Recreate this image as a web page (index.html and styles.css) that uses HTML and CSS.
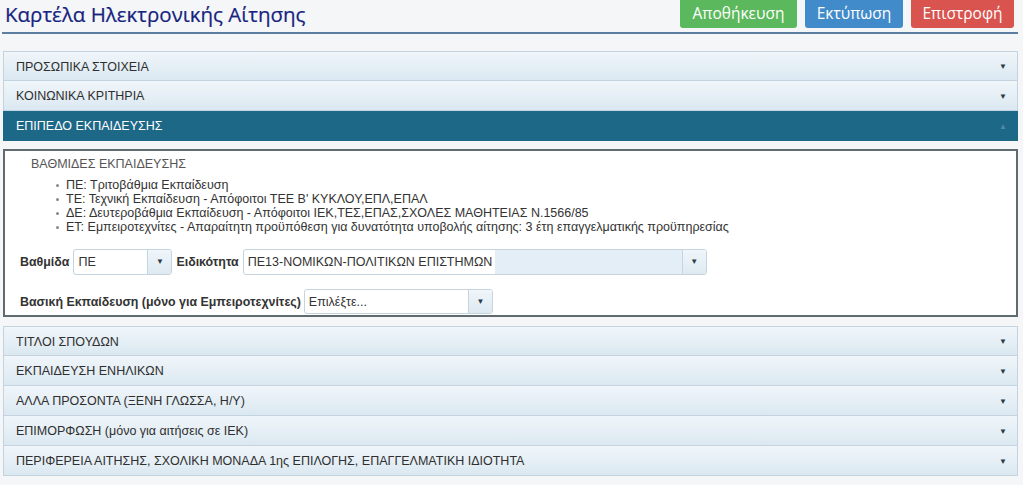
FILE: index.html
```html
<html>
    <head>
        <meta charset="utf-8">
        <link rel="stylesheet" href="styles.css">
    </head>
    <body>
        <header class="topbar">
            <h1 class="title">Καρτέλα Ηλεκτρονικής Αίτησης</h1>
            <div class="actions">
                <button class="btn btn-save">Αποθήκευση</button>
                <button class="btn btn-print">Εκτύπωση</button>
                <button class="btn btn-back">Επιστροφή</button>
            </div>
        </header>

        <section class="accordion">
            <div class="acc-head"><span>ΠΡΟΣΩΠΙΚΑ ΣΤΟΙΧΕΙΑ</span><span class="arrow">&#9660;</span></div>
            <div class="acc-head"><span>ΚΟΙΝΩΝΙΚΑ ΚΡΙΤΗΡΙΑ</span><span class="arrow">&#9660;</span></div>
            <div class="acc-head active"><span>ΕΠΙΠΕΔΟ ΕΚΠΑΙΔΕΥΣΗΣ</span><span class="arrow">&#9650;</span></div>

            <div class="acc-body">
                <div class="legend-title">ΒΑΘΜΙΔΕΣ ΕΚΠΑΙΔΕΥΣΗΣ</div>
                <ul class="legend">
                    <li>ΠΕ: Τριτοβάθμια Εκπαίδευση</li>
                    <li>ΤΕ: Τεχνική Εκπαίδευση - Απόφοιτοι ΤΕΕ Β' ΚΥΚΛΟΥ,ΕΠΛ,ΕΠΑΛ</li>
                    <li>ΔΕ: Δευτεροβάθμια Εκπαίδευση - Απόφοιτοι ΙΕΚ,ΤΕΣ,ΕΠΑΣ,ΣΧΟΛΕΣ ΜΑΘΗΤΕΙΑΣ Ν.1566/85</li>
                    <li>ΕΤ: Εμπειροτεχνίτες - Απαραίτητη προϋπόθεση για δυνατότητα υποβολής αίτησης: 3 έτη επαγγελματικής προϋπηρεσίας</li>
                </ul>

                <div class="form-row">
                    <label>Βαθμίδα</label>
                    <div class="combo combo-level">
                        <span class="combo-text">ΠΕ</span>
                        <span class="combo-btn">&#9660;</span>
                    </div>
                    <label>Ειδικότητα</label>
                    <div class="combo combo-spec">
                        <span class="combo-text">ΠΕ13-ΝΟΜΙΚΩΝ-ΠΟΛΙΤΙΚΩΝ ΕΠΙΣΤΗΜΩΝ</span>
                        <span class="combo-fill"></span>
                        <span class="combo-btn">&#9660;</span>
                    </div>
                </div>

                <div class="form-row">
                    <label>Βασική Εκπαίδευση (μόνο για Εμπειροτεχνίτες)</label>
                    <div class="combo combo-basic">
                        <span class="combo-text">Επιλέξτε...</span>
                        <span class="combo-btn">&#9660;</span>
                    </div>
                </div>
            </div>

            <div class="acc-head"><span>ΤΙΤΛΟΙ ΣΠΟΥΔΩΝ</span><span class="arrow">&#9660;</span></div>
            <div class="acc-head"><span>ΕΚΠΑΙΔΕΥΣΗ ΕΝΗΛΙΚΩΝ</span><span class="arrow">&#9660;</span></div>
            <div class="acc-head"><span>ΑΛΛΑ ΠΡΟΣΟΝΤΑ (ΞΕΝΗ ΓΛΩΣΣΑ, Η/Υ)</span><span class="arrow">&#9660;</span></div>
            <div class="acc-head"><span>ΕΠΙΜΟΡΦΩΣΗ (μόνο για αιτήσεις σε ΙΕΚ)</span><span class="arrow">&#9660;</span></div>
            <div class="acc-head"><span>ΠΕΡΙΦΕΡΕΙΑ ΑΙΤΗΣΗΣ, ΣΧΟΛΙΚΗ ΜΟΝΑΔΑ 1ης ΕΠΙΛΟΓΗΣ, ΕΠΑΓΓΕΛΜΑΤΙΚΗ ΙΔΙΟΤΗΤΑ</span><span class="arrow">&#9660;</span></div>
        </section>
    </body>
</html>
```

FILE: styles.css
```css
* { box-sizing: border-box; }

html, body {
    margin: 0;
    padding: 0;
}

body {
    background: #f4f6f7;
    font-family: "Liberation Sans", Arial, sans-serif;
    color: #333;
}

.topbar {
    display: flex;
    justify-content: space-between;
    align-items: flex-start;
    height: 34px;
    margin: 0 5px 0 2px;
    border-bottom: 2px solid #5b7ea2;
}

.title {
    margin: 0;
    padding: 0 0 0 3px;
    font-family: "Open Sans", sans-serif;
    font-weight: normal;
    font-size: 20.5px;
    line-height: 28px;
    color: #16237f;
    -webkit-text-stroke: 0.2px #16237f;
}

.actions {
    display: flex;
    gap: 8px;
    padding-right: 4px;
}

.btn {
    height: 28px;
    padding: 0 10px 2px 10px;
    border: none;
    border-radius: 0 0 3px 3px;
    color: #fff;
    font-family: "Open Sans", sans-serif;
    font-size: 15.5px;
}
.btn-save { background: #5cb85c; width: 117px; margin-left: 1px; }
.btn-print { background: #428bca; width: 98px; }
.btn-back { background: #d9534f; width: 103px; }

.accordion {
    margin: 17px 5px 0 3px;
}

.acc-head {
    display: flex;
    justify-content: space-between;
    align-items: center;
    height: 30px;
    padding: 1px 10px 0 12px;
    border: 1px solid #c3d3df;
    border-top: none;
    background: linear-gradient(#f0f6fa, #dbe8f1);
    font-size: 12.5px;
    color: #2f2f2f;
}
.acc-head:first-child { border-top: 1px solid #c3d3df; }
.acc-head .arrow { font-size: 8px; color: #2b3b48; }

.acc-head.active {
    background: #1d6787;
    border-color: #1d6787;
    color: #fff;
}
.acc-head.active .arrow { color: #4f89a4; }

.acc-body {
    margin: 8px 0 9px 0;
    height: 168px;
    padding: 5px 10px 0 15px;
    border: 2px solid #606b70;
    background: #fff;
}
.acc-body + .acc-head { border-top: 1px solid #c3d3df; }

.legend-title {
    padding-left: 11px;
    font-size: 12.5px;
    line-height: 16px;
    color: #555;
}

.legend {
    margin: 6px 0 0 0;
    padding-left: 46px;
    list-style: none;
    font-size: 12.5px;
    line-height: 14px;
    color: #333;
}
.legend li { position: relative; }
.legend li::before {
    content: "";
    position: absolute;
    left: -10px;
    top: 6px;
    width: 3px;
    height: 3px;
    border-radius: 50%;
    background: #888;
}

.form-row {
    display: flex;
    align-items: center;
    gap: 4px;
    margin-top: 15px;
}
.form-row + .form-row { margin-top: 14px; gap: 3px; }

.form-row label {
    font-weight: bold;
    font-size: 12.4px;
    color: #333;
}

.combo {
    display: flex;
    height: 26px;
    border: 1px solid #c5d4de;
    border-radius: 3px;
    background: #fff;
    font-size: 12.5px;
    overflow: hidden;
}
.combo-text {
    flex: 1;
    padding: 0 4px;
    line-height: 24px;
    white-space: nowrap;
}
.combo-fill {
    width: 187px;
    background: #e3eef6;
}
.combo-btn {
    width: 24px;
    border-left: 1px solid #c5d4de;
    background: linear-gradient(#f0f6fa, #dde9f2);
    text-align: center;
    font-size: 8px;
    line-height: 24px;
    color: #2b3b48;
}
.combo-level { width: 99px; }
.combo-spec { width: 464px; }
.combo-spec .combo-text { flex: none; width: 251px; }
.combo-basic { width: 189px; height: 25px; }
```
